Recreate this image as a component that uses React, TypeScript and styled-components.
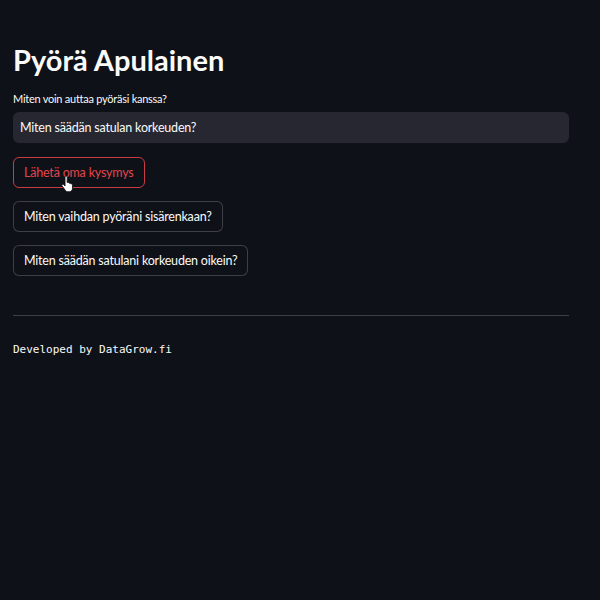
import React from "react";
import styled, { createGlobalStyle } from "styled-components";

const Global = createGlobalStyle`
  html, body { margin: 0; padding: 0; background: #0e1117; }
  body { font-family: Lato, "Liberation Sans", sans-serif; color: #fafafa; }
`;

const Page = styled.main`
  width: 600px;
  height: 600px;
  box-sizing: border-box;
  padding: 42px 31px 0 13px;
  display: flex;
  flex-direction: column;
`;

const Title = styled.h1`
  margin: 0;
  font-size: 29px;
  font-weight: 700;
  line-height: 36px;
  color: #fafafa;
`;

const Label = styled.label`
  margin-top: 14px;
  font-size: 11px;
  letter-spacing: -0.25px;
  line-height: 14px;
  color: #fafafa;
`;

const Input = styled.div`
  margin-top: 6px;
  height: 31px;
  box-sizing: border-box;
  background: #262730;
  border-radius: 6px;
  padding: 0 7px;
  display: flex;
  align-items: center;
  font-size: 12.5px;
  letter-spacing: -0.2px;
  color: #fafafa;
`;

const Buttons = styled.div`
  margin-top: 14px;
  display: flex;
  flex-direction: column;
  align-items: flex-start;
  gap: 13px;
`;

const Button = styled.button<{ $active?: boolean }>`
  position: relative;
  height: 31px;
  box-sizing: border-box;
  padding: 0 10px;
  border-radius: 6px;
  background: #0e1117;
  border: 1px solid ${(p) => (p.$active ? "#c93c43" : "rgba(250,250,250,0.2)")};
  color: ${(p) => (p.$active ? "#e4454b" : "#fafafa")};
  font-family: inherit;
  font-size: 12.5px;
  letter-spacing: -0.2px;
  display: flex;
  align-items: center;
`;

const Cursor = styled.svg`
  position: absolute;
  left: 47px;
  top: 18px;
  width: 13px;
  height: 16px;
`;

const Divider = styled.hr`
  margin: 39px 0 0;
  border: none;
  border-top: 1px solid rgba(250,250,250,0.2);
`;

const Footer = styled.div`
  margin-top: 27px;
  font-family: "DejaVu Sans Mono", "Liberation Mono", monospace;
  font-size: 11px;
  color: #fafafa;
`;

export default function App() {
  return (
    <>
      <Global />
      <Page>
        <Title>Pyörä Apulainen</Title>
        <Label>Miten voin auttaa pyöräsi kanssa?</Label>
        <Input>Miten säädän satulan korkeuden?</Input>
        <Buttons>
          <Button $active>
            Lähetä oma kysymys
            <Cursor viewBox="0 0 13 16">
              <path
                d="M4 1.2c0-.7.5-1.2 1.1-1.2s1.1.5 1.1 1.2v5.3l.3-.1c.6-.2 1.2 0 1.4.4l.2.4c.5-.3 1.2-.2 1.5.3l.1.3c.5-.3 1.2-.1 1.5.4.2.3.3.7.3 1.1v3c0 1.9-1.4 3.5-3.3 3.5H6.9c-1 0-1.9-.5-2.5-1.3L1.1 9.9c-.4-.5-.3-1.2.2-1.5.5-.3 1.1-.2 1.5.2L4 9.9V1.2z"
                fill="#fff"
                stroke="#111"
                strokeWidth="0.9"
              />
            </Cursor>
          </Button>
          <Button>Miten vaihdan pyöräni sisärenkaan?</Button>
          <Button>Miten säädän satulani korkeuden oikein?</Button>
        </Buttons>
        <Divider />
        <Footer>Developed by DataGrow.fi</Footer>
      </Page>
    </>
  );
}
